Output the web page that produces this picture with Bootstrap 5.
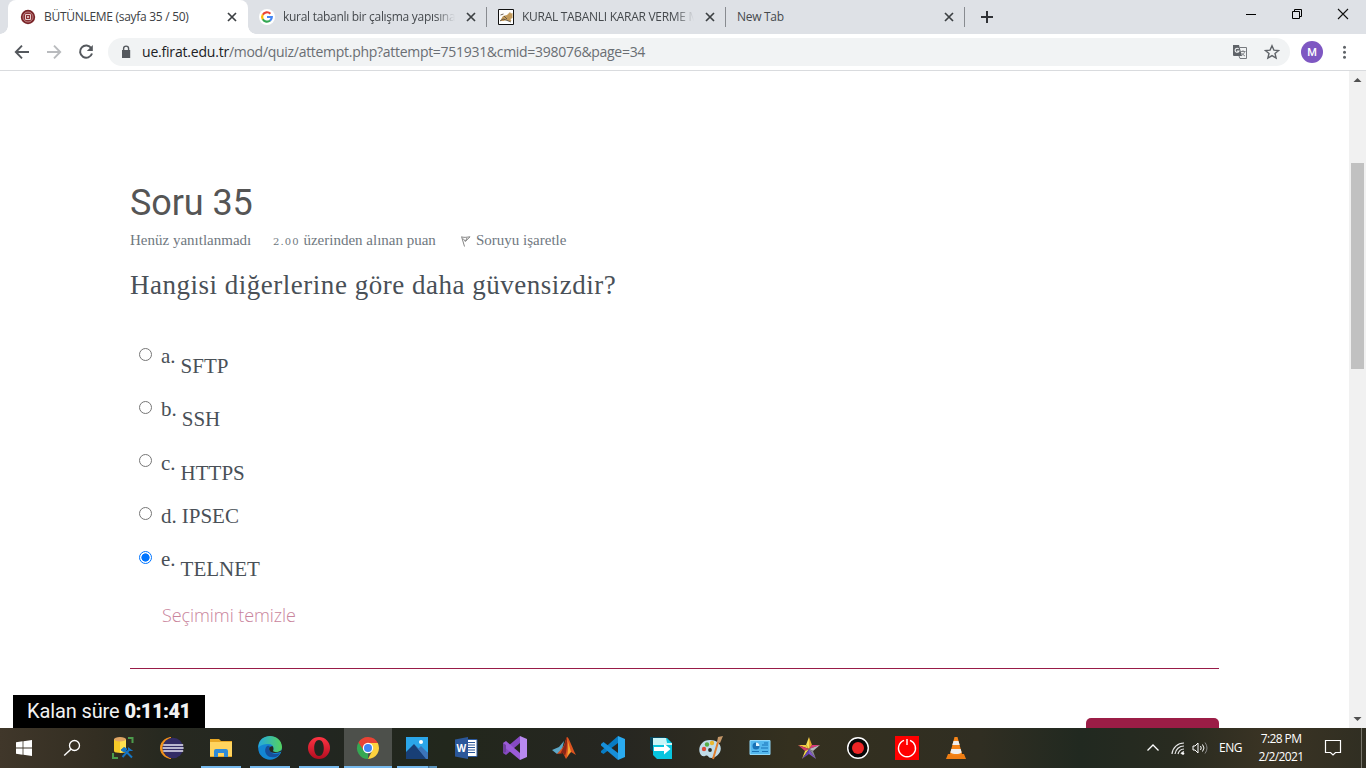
<!DOCTYPE html>
<html lang="tr">
<head>
<meta charset="utf-8">
<meta name="viewport" content="width=device-width, initial-scale=1">
<title>BÜTÜNLEME (sayfa 35 / 50)</title>
<link href="https://cdn.jsdelivr.net/npm/bootstrap@5.3.0/dist/css/bootstrap.min.css" rel="stylesheet">
<style>
html,body{height:768px;overflow:hidden}
body{width:1366px;font-family:"Open Sans","Noto Sans",sans-serif;background:#fff;color:#3c4043;line-height:1.2}
svg{display:block;flex:none}
.tabstrip{height:34px;background:#dee1e6;padding-left:8px}
.btab{width:239px;height:34px;padding:0 10px 0 12px;font-size:12px;letter-spacing:-.29px;color:#45494d;position:relative}
.btab.current{width:240px;background:#fff;border-radius:8px 8px 0 0;color:#3c4043}
.btab.current::before,.btab.current::after{content:"";position:absolute;bottom:0;width:8px;height:8px}
.btab.current::before{left:-8px;background:radial-gradient(circle at 0 0,transparent 7.5px,#fff 8px)}
.btab.current::after{right:-8px;background:radial-gradient(circle at 100% 0,transparent 7.5px,#fff 8px)}
.btab+.btab{padding-left:11px}
.vline+.btab{padding-left:11px}
.tabname{flex:1 1 0;min-width:0;overflow:hidden;white-space:nowrap;margin:0 10px 0 8px;line-height:22px}
.fadeend{-webkit-mask-image:linear-gradient(90deg,#000 89%,transparent 100%)}
.vline{width:1px;height:20px;background:#888b90;margin:0 0 0 -1px}
.winbtns{margin-left:auto}
.toolbar2{height:37px;border-bottom:1px solid #d9dbde;padding:0 0 0 14px}
.omni{width:1182px;height:28px;border-radius:14px;background:#f1f3f4;margin-left:14px;padding:0 10px 0 10px;font-size:14px;letter-spacing:-.29px;color:#6a6e73}
.omni b{font-weight:400;color:#202124;letter-spacing:-.2px}
.avatar{width:22px;height:22px;border-radius:50%;background:#7e57c2;color:#fff;font:500 11px Roboto,sans-serif;margin-left:11px}
.viewport{height:657px;overflow:hidden}
.quiz{width:1089px;margin-left:130px;padding-top:108px;font-family:"Liberation Serif",serif;color:#495057}
.quiz h1{font:400 36px/48px Roboto,sans-serif;color:#555;margin:0;letter-spacing:-.1px}
.meta{height:27px;font-size:15px;color:#6f7880;line-height:27px}
.m1{width:143px;white-space:nowrap}
.m2{width:188px;white-space:nowrap}
.m3{margin-left:5px;white-space:nowrap}
.oldnum{font:10px "DejaVu Serif",serif;letter-spacing:1.1px}
.qtext{font-size:27px;line-height:36px;margin-top:13px;color:#495057;letter-spacing:.51px}
.answers{margin:38px 0 0 9px;font-size:21px;line-height:30px}
.opt{height:53px}
.opt.short{height:44px}
.opt input{appearance:none;width:13px;height:13px;border:1px solid #767676;border-radius:50%;margin:7px 9px 0 0;background:#fff;flex:none}
.opt input:checked{border-color:#0075ff;background:radial-gradient(circle,#0075ff 3.8px,#fff 4.4px)}
.low{padding-top:10px}
.gapl{margin-left:5px}
.drop{padding-top:1px}
.low.drop{padding-top:11px}
.clearlink{margin-left:32px;font:300 18px/26px "Open Sans",sans-serif;letter-spacing:-.08px;color:#c9849c;height:26px;margin-top:5px}
.endrule{height:0;border-top:1px solid #981b48;margin-top:40px}
.nextbtn{width:133px;height:38px;border:0;border-radius:5px;background:#9b1d46;margin-top:49px}
.scroller{width:17px;background:#f1f1f1}
.thumb{width:13px;height:206px;background:#c1c1c1;margin-top:75px}
.timer{position:absolute;left:13px;top:695px;width:192px;height:33px;background:#000;color:#f2f2f2;font:400 20px/33px Roboto,sans-serif;padding-left:14px;white-space:nowrap;letter-spacing:-.12px}
.timer b{font-weight:900;letter-spacing:-.55px}
.taskbar{height:40px;background:linear-gradient(90deg,#40372a 0,#332e22 95px,#272920 160px,#222621 300px,#22271c 450px,#262621 620px,#34301f 790px,#302e22 980px,#212920 1080px,#292b20 1180px,#3b3424 1270px,#302e22 1366px);color:#fff}
.tcell{width:48px;height:40px;display:flex;align-items:center;justify-content:center;flex:none;position:relative}
.tcell.open::after{content:"";position:absolute;left:4px;right:4px;bottom:0;height:2px;background:#76b9ed}
.tcell.front{background:#4d504b}
.tcell.front::after{left:0;right:0}
.tcell.multi::after{background:linear-gradient(90deg,#76b9ed 31px,#3d6685 31px,#5c94bd 33px)}
.pins{gap:1px;margin-left:3px}
.eng{font-size:12px;letter-spacing:-.5px;margin-left:10px;width:24px}
.clock{width:60px;font-size:12px;line-height:18px;letter-spacing:-.6px;text-align:center;margin-left:8px}
.edge{width:1px;height:40px;background:#77756b;margin:0 4px 0 19px}
</style>
</head>
<body class="d-flex flex-column">
<header>
<div class="tabstrip d-flex align-items-center">
 <div class="btab current d-flex align-items-center">
  <svg width="16" height="16" viewBox="0 0 16 16"><circle cx="8" cy="8" r="7.2" fill="#7a2428"/><circle cx="8" cy="8" r="5" fill="#8c3034" stroke="#c99a9c" stroke-width=".8"/><path d="M5.500 5.500h5v5h-5z" fill="none" stroke="#f1e0e0" stroke-width=".9"/><circle cx="8" cy="8" r="1" fill="#f1e0e0"/></svg>
  <span class="tabname">BÜTÜNLEME (sayfa 35 / 50)</span>
  <svg width="12" height="12" viewBox="0 0 12 12"><path d="M2 2l8 8M10 2l-8 8" stroke="#3c4043" stroke-width="1.7"/></svg>
 </div>
 <div class="btab d-flex align-items-center">
  <svg width="16" height="16" viewBox="0 0 16 16"><circle cx="8" cy="8" r="8" fill="#fff"/><g fill="none" stroke-width="2.2"><path d="M11.4 4.700A4.800 4.800 0 0 0 3.800 5.700" stroke="#ea4335"/><path d="M3.800 5.600a4.800 4.800 0 0 0 0 4.800" stroke="#fbbc05"/><path d="M3.800 10.300a4.800 4.800 0 0 0 7.300 1.200" stroke="#34a853"/><path d="M8 8h4.800a4.800 4.800 0 0 1-1.700 3.600" stroke="#4285f4"/></g></svg>
  <span class="tabname fadeend">kural tabanlı bir çalışma yapısına s</span>
  <svg width="12" height="12" viewBox="0 0 12 12"><path d="M2 2l8 8M10 2l-8 8" stroke="#3c4043" stroke-width="1.7"/></svg>
 </div><i class="vline"></i>
 <div class="btab d-flex align-items-center">
  <svg width="16" height="16" viewBox="0 0 16 16"><path d="M.5.5h15v15H.5z" fill="#fff" stroke="#111"/><path d="M2 12l3-5 4-1 2-2 1-1 1 1.500 1.500-.5v5l-2 1 1 2h-3l-2-1-3 1z" fill="#c39b5c"/><path d="M2 12l3-2 3 1 5 2M2.500 6l3-1M6 7l3 3" stroke="#5d5245" fill="none" stroke-width=".9"/></svg>
  <span class="tabname fadeend">KURAL TABANLI KARAR VERME M</span>
  <svg width="12" height="12" viewBox="0 0 12 12"><path d="M2 2l8 8M10 2l-8 8" stroke="#3c4043" stroke-width="1.7"/></svg>
 </div><i class="vline"></i>
 <div class="btab d-flex align-items-center">
  <span class="tabname ms-0">New Tab</span>
  <svg width="12" height="12" viewBox="0 0 12 12"><path d="M2 2l8 8M10 2l-8 8" stroke="#3c4043" stroke-width="1.7"/></svg>
 </div><i class="vline"></i>
 <svg width="12" height="12" viewBox="0 0 12 12" class="ms-3"><path d="M6 0v12M0 6h12" stroke="#303236" stroke-width="2"/></svg>
 <div class="winbtns d-flex">
  <svg width="46" height="34" viewBox="0 0 46 34"><path d="M18 14.500h10" stroke="#000"/></svg>
  <svg width="46" height="34" viewBox="0 0 46 34"><path d="M18.500 11.500h7v7h-7zM20.500 11.500v-2h7v7h-2" fill="none" stroke="#000"/></svg>
  <svg width="46" height="34" viewBox="0 0 46 34"><path d="M18 9l10 10M28 9L18 19" stroke="#111" stroke-width="1.1"/></svg>
 </div>
</div>
<div class="toolbar2 d-flex align-items-center">
 <svg width="16" height="16" viewBox="0 0 16 16"><path d="M15 8H2M8 1.700L1.800 8 8 14.300" fill="none" stroke="#54585d" stroke-width="1.900"/></svg>
 <svg width="16" height="16" viewBox="0 0 16 16" class="ms-3"><path d="M1 8h13M8 1.700L14.200 8 8 14.300" fill="none" stroke="#b9bbbe" stroke-width="1.900"/></svg>
 <svg width="16" height="16" viewBox="0 0 16 16" class="ms-3"><path d="M13.300 4.300A6.100 6.100 0 1 0 14 9.500" fill="none" stroke="#54585d" stroke-width="2"/><path d="M14.800 1v6H8.800z" fill="#54585d"/></svg>
 <div class="omni d-flex align-items-center">
  <svg width="16" height="16" viewBox="0 0 16 16"><path d="M4 6h8.200v8H4z" fill="#54585d"/><path d="M5.600 7V4.600a2.500 2.500 0 0 1 5 0V7" fill="none" stroke="#54585d" stroke-width="1.400"/></svg>
  <span class="ms-2 flex-fill text-nowrap"><b>ue.firat.edu.tr</b>/mod/quiz/attempt.php?attempt=751931&amp;cmid=398076&amp;page=34</span>
  <svg width="16" height="16" viewBox="0 0 16 16"><path d="M1 1h6l3 11H2a1 1 0 0 1-1-1z" fill="#5f6368"/><path d="M7.500 3.500H14.500v11H8l-1-2.500" fill="none" stroke="#777a7f"/><path d="M8.500 7.500h5M11 6.200v1.300M12.600 7.600c-.5 2-1.500 3-3 4M9.700 9c.8 1.500 2 2.300 3.300 3" fill="none" stroke="#777a7f" stroke-width=".9"/><path d="M6.700 5A2 2 0 1 0 7 7H5" fill="none" stroke="#f1f3f4" stroke-width="1.100"/></svg>
  <svg width="16" height="16" viewBox="0 0 16 16" class="ms-3"><path d="M8 1.800l1.900 4.300 4.700.4-3.600 3 1.100 4.600L8 11.600l-4.100 2.500L5 9.500l-3.600-3 4.700-.4z" fill="none" stroke="#5f6368" stroke-width="1.400"/></svg>
 </div>
 <div class="avatar d-flex align-items-center justify-content-center">M</div>
 <svg width="16" height="16" viewBox="0 0 16 16" style="margin-left:14px"><g fill="#5f6368"><circle cx="7.500" cy="3.200" r="1.500"/><circle cx="7.500" cy="8.200" r="1.500"/><circle cx="7.500" cy="13.200" r="1.500"/></g></svg>
</div>
</header>
<main class="viewport d-flex justify-content-between">
 <section class="quiz">
  <h1>Soru 35</h1>
  <div class="meta d-flex align-items-center"><span class="m1">Henüz yanıtlanmadı</span><span class="m2"><span class="oldnum">2.00</span> üzerinden alınan puan</span>
   <svg width="10" height="13" viewBox="0 0 10 13"><path d="M.500 2.500l3 10M1 3c2.500.7 5 .2 8-.2L4.300 7.500M2 4.500l2.400 2.800L6 4" fill="none" stroke="#777" stroke-width=".9"/></svg>
   <span class="m3">Soruyu işaretle</span></div>
  <div class="qtext">Hangisi diğerlerine göre daha güvensizdir?</div>
  <div class="answers">
   <label class="opt d-flex"><input type="radio" name="q"><span>a.</span><span class="low gapl">SFTP</span></label>
   <label class="opt d-flex"><input type="radio" name="q"><span>b.</span><span class="low gapl">SSH</span></label>
   <label class="opt d-flex"><input type="radio" name="q"><span class="drop">c.</span><span class="low drop gapl">HTTPS</span></label>
   <label class="opt short d-flex"><input type="radio" name="q"><span class="drop">d.</span><span class="drop gapl">IPSEC</span></label>
   <label class="opt d-flex"><input type="radio" name="q" checked><span>e.</span><span class="low gapl">TELNET</span></label>
  </div>
  <div class="clearlink">Seçimimi temizle</div>
  <div class="endrule"></div>
  <button class="nextbtn d-block ms-auto" type="button" aria-label="Sonraki"></button>
 </section>
 <aside class="scroller d-flex flex-column align-items-center">
  <svg width="17" height="17" viewBox="0 0 17 17"><path d="M4.500 11L8.500 7l4 4z" fill="#505050"/></svg>
  <div class="thumb"></div>
  <svg width="17" height="17" viewBox="0 0 17 17" class="mt-auto"><path d="M4.500 6l4 4 4-4z" fill="#505050"/></svg>
 </aside>
</main>
<div class="timer">Kalan süre <b>0:11:41</b></div>
<footer class="taskbar d-flex align-items-center">
 <div class="tcell"><svg width="16" height="16" viewBox="0 0 16 16" fill="#fff"><path d="M0 2.300L6.600 1.300v6.300H0zM7.400 1.200L16 0v7.600H7.400zM0 8.400h6.600v6.300L0 13.700zM7.400 8.400H16V16l-8.600-1.200z"/></svg></div>
 <div class="tcell"><svg width="18" height="18" viewBox="0 0 18 18"><circle cx="11.500" cy="6.500" r="5" fill="none" stroke="#fff" stroke-width="1.300"/><path d="M7.900 10.200L1.200 16.600" stroke="#fff" stroke-width="1.400"/></svg></div>
 <div class="pins d-flex">
 <div class="tcell"><svg width="24" height="24" viewBox="0 0 24 24"><path d="M3 3v12c0 2.500 12 2.500 12 0V3z" fill="#f5c928"/><path d="M9 4h6v12l-6 1z" fill="#ffe04f"/><ellipse cx="9" cy="3.200" rx="6" ry="2.200" fill="#dfa463"/><path d="M17 2h4.500v5M2 17v5h5" fill="none" stroke="#4c9b4c" stroke-width="2"/><path d="M11.500 21l7.500-8M13 13.500l8 8" stroke="#1675c4" stroke-width="2"/><path d="M10 14l3-2.500 3 1.500-3 3zM17.500 11.500v3h4" fill="#1675c4" stroke="#1675c4"/></svg></div>
 <div class="tcell"><svg width="24" height="24" viewBox="0 0 24 24"><path d="M11 1.500C-3 3-3 21 11 22.500-1 18-1 6 11 1.500z" fill="#f7941e" stroke="#f7941e"/><circle cx="13" cy="12" r="10.300" fill="#332c66"/><path d="M3.200 9h20M2.600 12h21M3.200 15h20" stroke="#e8e5f3" stroke-width="1.600"/></svg></div>
 <div class="tcell open"><svg width="24" height="24" viewBox="0 0 24 24"><path d="M1 3h9l2 2h11v16H1z" fill="#e8a825"/><path d="M1 6h22v14H1z" fill="#ffd45e"/><path d="M5 21v-6q0-2 2-2h10q2 0 2 2v6h-4v-4H9v4z" fill="#2f8bd7"/></svg></div>
 <div class="tcell open"><svg width="24" height="24" viewBox="0 0 24 24"><defs><linearGradient id="eg"><stop stop-color="#25a9df"/><stop offset="1" stop-color="#55d35d"/></linearGradient></defs><circle cx="12" cy="12" r="11.800" fill="#1386d3"/><path d="M.4 10C1-3 23-4 24 11c0 6-8 7-9.500 4 2-3 1-7-4-7C6 8 2 9 .4 12z" fill="url(#eg)"/><path d="M9 10c-4 4-1 11 4 11 4 1 7 0 9-4-4 2-10 1-11-4-.3-1-.1-2 1-3-1-.5-2-.5-3 0z" fill="#164f9c"/><path d="M11.600 11c-1.500 3 1 6 5 6 3 0 4-1 6-1l1.400-2c-3 2-7 3-9 1 .8-1 .6-4-.6-5z" fill="#252720"/></svg></div>
 <div class="tcell open"><svg width="24" height="24" viewBox="0 0 24 24"><defs><linearGradient id="og" x2="0" y2="1"><stop stop-color="#ff3443"/><stop offset="1" stop-color="#b30d20"/></linearGradient></defs><path fill-rule="evenodd" d="M12 1a11 11 0 1 0 0 22 11 11 0 0 0 0-22zm0 3c3 0 4.800 3.500 4.800 8s-1.800 8-4.800 8-4.800-3.500-4.800-8S9 4 12 4z" fill="url(#og)"/></svg></div>
 <div class="tcell open front"><svg width="24" height="24" viewBox="0 0 24 24"><path d="M12 12v11A11 11 0 0 1 2.470 6.500z" fill="#35a853"/><path d="M12 7h9.800A11 11 0 0 1 12 23l4.300-8.500z" fill="#fdd23e"/><path d="M2.470 6.500L7.700 14.500 12 7h9.800A11 11 0 0 0 2.470 6.500z" fill="#e84335"/><circle cx="12" cy="12" r="5.200" fill="#fff"/><circle cx="12" cy="12" r="4" fill="#4285f4"/></svg></div>
 <div class="tcell open multi"><svg width="24" height="24" viewBox="0 0 24 24"><path d="M1 1h22v22H1z" fill="#2ba6ea"/><path d="M1 16L9 8l7 8 2-2 5 3v6H1z" fill="#183f76"/><path d="M9 8l4.500 4.500L16 10l7 7v6h-2z" fill="#3c74b8"/><circle cx="16" cy="6" r="2" fill="#fff"/></svg></div>
 <div class="tcell"><svg width="24" height="24" viewBox="0 0 24 24"><path d="M12 3.500h11v17H12z" fill="#fff" stroke="#2b579a"/><path d="M14 6.500h7M14 9h7M14 11.500h7M14 14h7M14 16.500h7" stroke="#2b579a"/><path d="M1 3.500L14 1v22L1 20.500z" fill="#2b579a"/><text x="2.500" y="16" font-family="Open Sans" font-size="10" font-weight="700" fill="#fff">W</text></svg></div>
 <div class="tcell"><svg width="24" height="24" viewBox="0 0 24 24"><path d="M17 0l7 3v18l-7 3z" fill="#b889ef"/><path d="M17 0v7L3 19l-3-2v-3z" fill="#874ac4"/><path d="M0 7l3-2 14 12v7L0 10z" fill="#9b5bd8"/><path d="M0 7l3 2v7l-3 1z" fill="#70409f"/></svg></div>
 <div class="tcell"><svg width="24" height="24" viewBox="0 0 24 24"><path d="M0 14l7-3 5-6-2 9-5 4z" fill="#5da7c7"/><path d="M5 18l6-7c2-3 3-9 4-10 2 0 6 13 9 18l-5-3-5 7-3-6z" fill="#dc5420"/><path d="M11 12c2-3 3-10 4-11 0 8 0 14-2 19l-2-3-3 1z" fill="#8b2517"/><path d="M15 2c2 7 1 14 0 19 3-5 4-5 4-5z" fill="#f7aa34"/></svg></div>
 <div class="tcell"><svg width="24" height="24" viewBox="0 0 24 24"><path d="M17 0l7 3v18l-7 3z" fill="#2aaaf0"/><path d="M17 0v7L2.500 18 0 16.500V15z" fill="#087cc4"/><path d="M0 8l2.500-2L17 17v7L0 9.500z" fill="#178fd9"/></svg></div>
 <div class="tcell"><svg width="24" height="24" viewBox="0 0 24 24"><path d="M0 1h15v14H2l-2-2z" fill="#07465c"/><path d="M3 2h14l5 5v16H7l-4-4z" fill="#08c5df"/><path d="M3 2h13l1 5h5v2H3z" fill="#c9f5f8"/><path d="M4 11h10V7.500l6.500 5.500-6.500 5.500V15H4z" fill="#fff"/></svg></div>
 <div class="tcell"><svg width="24" height="24" viewBox="0 0 24 24"><path d="M11 4C1 4-2 14 2 19c3 3 5-1 7 1 1 3 8 3 12-4 3-7-3-12-10-12z" fill="#c0dce9"/><circle cx="5" cy="13" r="2.200" fill="#db4b39"/><circle cx="8" cy="8.500" r="2.200" fill="#56ad46"/><circle cx="13" cy="7" r="2.200" fill="#e9b72f"/><circle cx="11" cy="14" r="1.900" fill="#282c26"/><path d="M14 23l5-17" stroke="#df7e2f" stroke-width="2"/><path d="M18 6l1-5 5-1-3 7z" fill="#c69869"/></svg></div>
 <div class="tcell"><svg width="24" height="24" viewBox="0 0 24 24"><path d="M2 4.500h20v14H2z" fill="#54b8ee" stroke="#91d8fa"/><circle cx="8" cy="10" r="3.500" fill="#1972b7"/><path d="M8 10V6.500a3.500 3.500 0 0 1 3.500 3.500z" fill="#e3f6ff"/><path d="M13 12h7M14 9h6M16 7h4M4 15.500h7M14 15.500h6" stroke="#1972b7" stroke-width="1.100"/></svg></div>
 <div class="tcell"><svg width="24" height="24" viewBox="0 0 24 24"><path d="M12 13V1l3 8z" fill="#e5a92b"/><path d="M12 13V1L9 9z" fill="#f6df57"/><path d="M12 13L15 9h8z" fill="#d9397b"/><path d="M12 13l11-4-7 6z" fill="#b8b8be"/><path d="M12 13L9 9H1z" fill="#f0c940"/><path d="M12 13L1 9l7 6z" fill="#d43d6a"/><path d="M12 13l-4 2-3 8z" fill="#f4d94d"/><path d="M12 13L5 23l7-5z" fill="#6444b1"/><path d="M12 13v5l7 5z" fill="#8057cb"/><path d="M12 13l4 2 3 8z" fill="#8b8b94"/></svg></div>
 <div class="tcell"><svg width="24" height="24" viewBox="0 0 24 24"><circle cx="12" cy="12" r="10.300" fill="#080808" stroke="#fff" stroke-width="1.400"/><circle cx="12" cy="12" r="6" fill="#ed2525"/></svg></div>
 <div class="tcell"><svg width="24" height="24" viewBox="0 0 24 24"><path d="M0 0h24v24H0z" fill="#f00"/><path d="M9 4.300a8.500 8.500 0 1 0 6 0M12 3v6" fill="none" stroke="#fff" stroke-width="1.400"/></svg></div>
 <div class="tcell"><svg width="24" height="24" viewBox="0 0 24 24"><path d="M4 18h16l2 5H2z" fill="#ee7d13"/><path d="M10.500 1h3l4.500 17c-2 2-10 2-12 0z" fill="#f58418"/><path d="M9.500 5h5l1.200 4H8.300zM7.300 13h9.400l1 3.500c-3 2-8 2-11.400 0z" fill="#eee"/></svg></div>
 </div>
 <div class="d-flex align-items-center ms-auto">
  <svg width="14" height="14" viewBox="0 0 14 14"><path d="M1.500 9.500L7 4l5.500 5.500" fill="none" stroke="#fff" stroke-width="1.300"/></svg>
  <svg width="14" height="14" viewBox="0 0 14 14" style="margin-left:11px"><path d="M1 13A12 12 0 0 1 13 2M4 13a9 9 0 0 1 9-8M7 13a6.500 6.500 0 0 1 6-5M10 13a4 4 0 0 1 3-2.500" fill="none" stroke="#e7e7e7" stroke-width="1.200"/><circle cx="12" cy="12.500" r="1.300" fill="#fff"/></svg>
  <svg width="17" height="14" viewBox="0 0 17 14" style="margin-left:7px"><path d="M1 5h2l3-3v10L3 9H1z" fill="none" stroke="#fff"/><path d="M8.500 5q1.500 2 0 4M10.500 3.500q3 3.500 0 7" fill="none" stroke="#fff"/><path d="M13 1.500q4 5.500 0 11" fill="none" stroke="#888"/></svg>
  <span class="eng">ENG</span>
  <div class="clock">7:28 PM<br>2/2/2021</div>
  <svg width="18" height="18" viewBox="0 0 18 18" style="margin-left:13px"><path d="M1.500 1.500h15v12h-5L9 16l-2.500-2.500h-5z" fill="none" stroke="#fff" stroke-width="1.200"/></svg>
  <i class="edge"></i>
 </div>
</footer>
</body>
</html>
